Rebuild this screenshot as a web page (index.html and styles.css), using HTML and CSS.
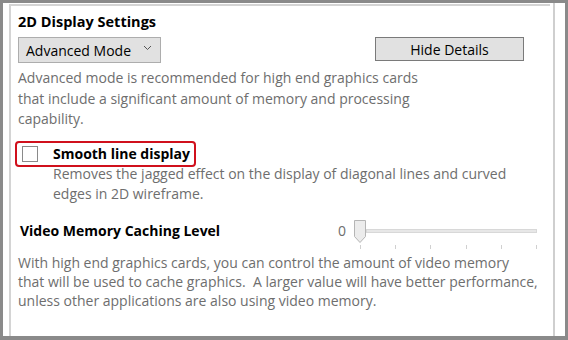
FILE: index.html
```html
<!DOCTYPE html>
<html lang="en">
<head>
    <meta charset="UTF-8">
    <title>2D Display Settings</title>
    <link rel="stylesheet" href="styles.css">
</head>
<body>
    <div class="frame">
        <div class="panel">
            <h2 class="title">2D Display Settings</h2>
            <div class="mode-row">
                <div class="dropdown">
                    <span>Advanced Mode</span>
                    <svg class="chevron" width="9" height="6" viewBox="0 0 9 6"><path d="M1 1 L4.5 4.5 L8 1" fill="none" stroke="#555" stroke-width="1"/></svg>
                </div>
                <button class="btn">Hide Details</button>
            </div>
            <p class="note">Advanced mode is recommended for high end graphics cards that include a significant amount of memory and processing capability.</p>

            <div class="check-row">
                <span class="checkbox"></span>
                <span class="check-label">Smooth line display</span>
            </div>
            <p class="note indent">Removes the jagged effect on the display of diagonal lines and curved edges in 2D wireframe.</p>

            <div class="slider-row">
                <span class="slider-label">Video Memory Caching Level</span>
                <span class="slider-value">0</span>
                <div class="slider">
                    <svg class="thumb" width="14" height="25" viewBox="0 0 14 25"><path d="M1.5 0.5 H12.5 V16.5 L7 22.5 L1.5 16.5 Z" fill="#ececec" stroke="#b5b5b5" stroke-width="1"/></svg>
                    <div class="track"></div>
                    <div class="ticks">
                        <span></span><span></span><span></span><span></span><span></span><span></span>
                    </div>
                </div>
            </div>
            <p class="note para">With high end graphics cards, you can control the amount of video memory<br>that will be used to cache graphics.&nbsp; A larger value will have better performance,<br>unless other applications are also using video memory.</p>
        </div>
        <div class="divider"></div>
    </div>
</body>
</html>
```

FILE: styles.css
```css
body {
    margin: 0;
    font-family: "Open Sans", "Noto Sans", sans-serif;
    font-size: 14px;
    background-color: #fff;
}
.frame {
    width: 568px;
    height: 340px;
    box-sizing: border-box;
    border: 3px solid #8a8a8a;
    border-bottom-width: 4px;
    display: flex;
    overflow: hidden;
}
.panel {
    flex: 1;
    min-width: 0;
    margin: 1px 0 0 6px;
    border-top: 2px solid #d4d4d4;
    border-left: 2px solid #d4d4d4;
    padding: 6px 0 0 7px;
}
.divider {
    width: 2px;
    margin: 0 10px 0 3px;
    background-color: #cfcfcf;
}
.title {
    margin: 0;
    font-size: 14.5px;
    font-weight: 700;
    line-height: 20px;
    color: #000;
}
.mode-row {
    display: flex;
    align-items: flex-start;
    margin-top: 5px;
}
.dropdown {
    width: 134px;
    height: 24px;
    border: 1px solid #adadad;
    background-color: #e1e1e1;
    display: flex;
    align-items: center;
    padding-left: 7px;
    color: #000;
}
.dropdown span {
    flex: 1;
}
.chevron {
    margin-right: 8px;
    margin-bottom: 4px;
}
.btn {
    margin-left: auto;
    margin-right: 26px;
    width: 149px;
    height: 24px;
    border: 1px solid #7a7a7a;
    background-color: #e1e1e1;
    font-family: inherit;
    font-size: 14px;
    color: #000;
    padding: 0;
}
.note {
    margin: 5px 0 0 0;
    color: #6e6e6e;
    line-height: 20.5px;
    width: 420px;
}
.note.indent {
    margin: -3px 0 0 35px;
    width: 460px;
    line-height: 20px;
}
.note.para {
    width: 540px;
    margin-top: 0;
    line-height: 19px;
}
.check-row {
    display: inline-flex;
    align-items: center;
    margin: 11px 0 0 -3px;
    height: 22px;
    padding: 0 4px 0 5px;
    border: 2px solid #d0101c;
    border-radius: 4px;
}
.checkbox {
    width: 14px;
    height: 14px;
    border: 1px solid #8a8a8a;
    background-color: #fff;
}
.check-label {
    margin-left: 15px;
    font-weight: 700;
    color: #000;
}
.slider-row {
    display: flex;
    align-items: flex-start;
    margin-top: 15px;
    margin-left: 2px;
    height: 34px;
}
.slider-label {
    font-weight: 700;
    color: #000;
    line-height: 24px;
    width: 318px;
}
.slider-value {
    color: #6e6e6e;
    line-height: 24px;
    width: 14px;
}
.slider {
    position: relative;
    width: 186px;
    height: 34px;
}
.thumb {
    position: absolute;
    left: 1px;
    top: 1px;
}
.track {
    margin: 10px 0 0 14px;
    width: 169px;
    height: 2px;
    border: 1px solid #d8d8d8;
    background-color: #e7e7e7;
}
.ticks {
    display: flex;
    justify-content: space-between;
    margin: 12px 0 0 8px;
    width: 177px;
}
.ticks span {
    width: 1px;
    height: 4px;
    background-color: #d0d0d0;
}
```
